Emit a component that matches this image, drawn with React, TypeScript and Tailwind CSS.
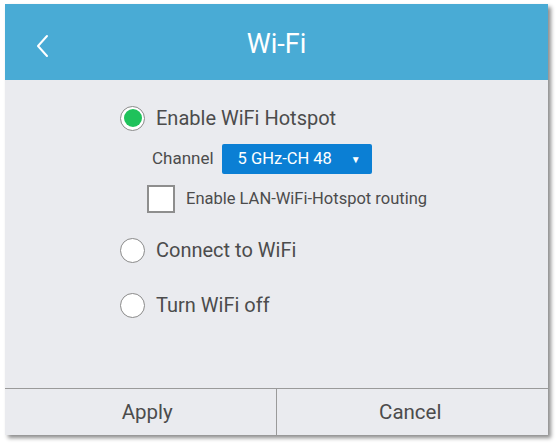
import { useState } from "react";

type Mode = "hotspot" | "connect" | "off";

function Radio({ checked }: { checked: boolean }) {
  return (
    <span className="flex h-[25px] w-[25px] shrink-0 items-center justify-center rounded-full border-[1.5px] border-[#8a8a8a] bg-white">
      {checked ? <span className="h-[18px] w-[18px] rounded-full bg-[#1fc25b]" /> : null}
    </span>
  );
}

export default function App() {
  const [mode, setMode] = useState<Mode>("hotspot");
  const [routing, setRouting] = useState(false);

  const options: { id: Mode; label: string }[] = [
    { id: "hotspot", label: "Enable WiFi Hotspot" },
    { id: "connect", label: "Connect to WiFi" },
    { id: "off", label: "Turn WiFi off" },
  ];

  return (
    <div className="h-[447px] w-[556px] bg-white pl-[5px] pt-[4px] font-['Roboto',sans-serif]">
      <div className="flex h-[431px] w-[543px] flex-col bg-[#eaebef] shadow-[3px_3px_4px_rgba(0,0,0,0.45)]">
        <header className="relative flex h-[76px] items-center justify-center bg-[#49abd5] pt-[4px] text-white">
          <button type="button" className="absolute left-[26px] top-[26px] p-1">
            <svg width="14" height="24" viewBox="0 0 14 24" fill="none">
              <path d="M12 2 L3 12 L12 22" stroke="white" strokeWidth="2" strokeLinecap="round" strokeLinejoin="round" />
            </svg>
          </button>
          <h1 className="text-[27px] font-normal">Wi-Fi</h1>
        </header>

        <div className="flex-1 pl-[115px] pt-[23px] text-[#4c4c4c]">
          <button type="button" className="flex items-center gap-[11px]" onClick={() => setMode(options[0].id)}>
            <Radio checked={mode === "hotspot"} />
            <span className="text-[20px]">{options[0].label}</span>
          </button>

          <div className="ml-[32px] mt-[11px] flex items-center gap-[8px]">
            <span className="text-[17px]">Channel</span>
            <div className="flex h-[30px] w-[150px] items-center justify-between rounded-[2px] bg-[#0b7fd4] pl-[16px] pr-[11px] text-white">
              <span className="text-[16.5px]">5 GHz-CH 48</span>
              <span className="text-[10px]">▼</span>
            </div>
          </div>

          <button
            type="button"
            className="ml-[27px] mt-[11px] flex items-center gap-[11px]"
            onClick={() => setRouting(!routing)}
          >
            <span className="flex h-[28px] w-[28px] items-center justify-center border-2 border-[#8e8e8e] bg-white text-[#1fc25b]">
              {routing ? "✓" : null}
            </span>
            <span className="text-[16.5px]">Enable LAN-WiFi-Hotspot routing</span>
          </button>

          <button type="button" className="mt-[22px] flex items-center gap-[11px]" onClick={() => setMode(options[1].id)}>
            <Radio checked={mode === "connect"} />
            <span className="text-[20px]">{options[1].label}</span>
          </button>

          <button type="button" className="mt-[25px] flex items-center gap-[11px]" onClick={() => setMode(options[2].id)}>
            <Radio checked={mode === "off"} />
            <span className="text-[20px]">{options[2].label}</span>
          </button>
        </div>

        <footer className="grid h-[47px] grid-cols-2 border-t border-[#9a9a9a] text-[20.5px] text-[#4c4c4c]">
          <button type="button" className="border-r border-[#9a9a9a] pl-[14px]">
            Apply
          </button>
          <button type="button" className="pr-[4px]">
            Cancel
          </button>
        </footer>
      </div>
    </div>
  );
}
